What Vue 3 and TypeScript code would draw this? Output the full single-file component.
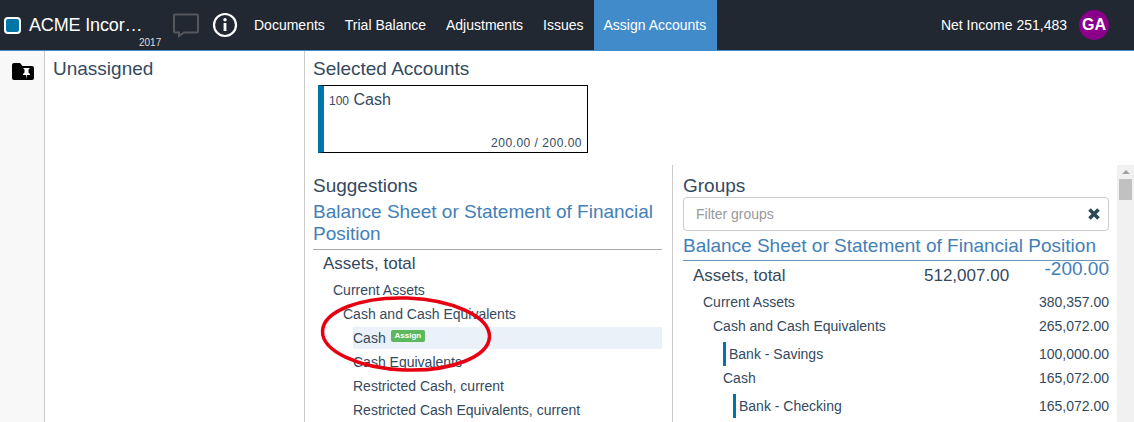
<template>
  <div class="page">
    <nav class="topbar">
      <div class="brand">
        <span class="brand-mark"></span>
        <span class="brand-name">ACME Incor…</span>
        <span class="brand-year">2017</span>
      </div>
      <svg class="chat-icon" width="28" height="28" viewBox="0 0 28 28">
        <path d="M3 3.500h22a1 1 0 0 1 1 1v16a1 1 0 0 1-1 1H12l-5 3.500v-3.500H3a1 1 0 0 1-1-1v-16a1 1 0 0 1 1-1z" fill="none" stroke="#54585d" stroke-width="2" />
      </svg>
      <svg class="info-icon" width="26" height="26" viewBox="0 0 26 26">
        <circle cx="13" cy="13" r="11" fill="none" stroke="#fff" stroke-width="2.200" />
        <rect x="11.600" y="11" width="2.800" height="8" fill="#fff" />
        <circle cx="13" cy="7.800" r="1.700" fill="#fff" />
      </svg>
      <ul class="nav-links">
        <li v-for="link in links" :key="link" :class="{ active: link === 'Assign Accounts' }">{{ link }}</li>
      </ul>
      <div class="nav-right">
        <span>Net Income 251,483</span>
        <span class="avatar">GA</span>
      </div>
    </nav>

    <div class="main">
      <aside class="rail">
        <svg width="22" height="17" viewBox="0 0 22 17">
          <path d="M2 0h6l2.500 3H20a2 2 0 0 1 2 2v10a2 2 0 0 1-2 2H2a2 2 0 0 1-2-2V2a2 2 0 0 1 2-2z" fill="#000" />
          <path d="M11.500 5h6v1l-1 .5v3l1.500 1.500v1h-3l-.500 4-.500-4h-3v-1l1.500-1.500v-3l-1-.500z" fill="#fff" />
        </svg>
      </aside>

      <section class="unassigned">
        <h3>Unassigned</h3>
      </section>

      <section class="workspace">
        <div class="selected">
          <h3>Selected Accounts</h3>
          <div class="account-card">
            <div class="account-title"><small>100</small> Cash</div>
            <div class="account-amount">200.00 / 200.00</div>
          </div>
        </div>

        <div class="columns">
          <div class="suggestions">
            <h3>Suggestions</h3>
            <h4 class="taxonomy">Balance Sheet or Statement of Financial Position</h4>
            <div class="tree">
              <div class="row-total">Assets, total</div>
              <div class="row lvl1">Current Assets</div>
              <div class="row lvl2">Cash and Cash Equivalents</div>
              <div class="row lvl3 hovered">Cash <span class="assign">Assign</span></div>
              <div class="row lvl3">Cash Equivalents</div>
              <div class="row lvl3">Restricted Cash, current</div>
              <div class="row lvl3">Restricted Cash Equivalents, current</div>
            </div>
            <svg class="annotation" width="176" height="92" viewBox="0 0 176 92">
              <ellipse cx="86" cy="46" rx="83.500" ry="36" transform="rotate(2 86 46)" fill="none" stroke="#e60012" stroke-width="3.500" />
            </svg>
          </div>

          <div class="groups">
            <h3>Groups</h3>
            <div class="filter">
              <span>Filter groups</span>
              <svg width="14" height="14" viewBox="0 0 14 14">
                <path d="M2.500 2.500l9 9M11.500 2.500l-9 9" stroke="#2c4a55" stroke-width="3.600" />
              </svg>
            </div>
            <h4 class="taxonomy underlined">Balance Sheet or Statement of Financial Position</h4>
            <div class="tree">
              <div class="group-total">
                <span class="total-name">Assets, total</span>
                <span class="total-value">512,007.00</span>
                <span class="total-diff">-200.00</span>
              </div>
              <div v-for="g in groupRows" :key="g.name" :class="['group-row', g.cls]">
                <span :class="{ account: g.account }">{{ g.name }}</span>
                <span>{{ g.value }}</span>
              </div>
            </div>
          </div>

          <div class="scrollbar">
            <span class="arrow"></span>
            <span class="thumb"></span>
          </div>
        </div>
      </section>
    </div>
  </div>
</template>

<script setup lang="ts">
const links: string[] = ['Documents', 'Trial Balance', 'Adjustments', 'Issues', 'Assign Accounts']

const groupRows: { name: string; value: string; cls: string; account?: boolean }[] = [
  { name: 'Current Assets', value: '380,357.00', cls: 'lvl1' },
  { name: 'Cash and Cash Equivalents', value: '265,072.00', cls: 'lvl2' },
  { name: 'Bank - Savings', value: '100,000.00', cls: 'lvl3', account: true },
  { name: 'Cash', value: '165,072.00', cls: 'lvl3' },
  { name: 'Bank - Checking', value: '165,072.00', cls: 'lvl4', account: true }
]
</script>

<style>
html, body {
  margin: 0;
  overflow: hidden;
}
</style>

<style scoped>
.page {
  width: 1134px;
  height: 422px;
  overflow: hidden;
  display: flex;
  flex-direction: column;
  font-family: "Liberation Sans", Arial, sans-serif;
  font-size: 14px;
  color: #34495e;
  background: #fff;
}

h3, h4 {
  margin: 0;
  font-weight: 400;
}

.topbar {
  flex: none;
  height: 50px;
  display: flex;
  align-items: center;
  background: #222831;
  border-bottom: 1px solid #428bca;
  color: #fff;
}

.brand {
  position: relative;
  width: 172px;
  display: flex;
  align-items: center;
  padding-left: 4px;
  box-sizing: border-box;
}
.brand-mark {
  width: 13px;
  height: 13px;
  border: 2px solid #fff;
  border-radius: 4px;
  background: #0076a8;
  margin-right: 8px;
}
.brand-name {
  font-size: 18px;
  letter-spacing: -0.15px;
  white-space: nowrap;
}
.brand-year {
  position: absolute;
  left: 139px;
  top: 22px;
  font-size: 10px;
  color: #ddd;
}

.chat-icon {
  margin-right: 12px;
}
.info-icon {
  margin-right: 6px;
}

.nav-links {
  list-style: none;
  margin: 0;
  padding: 0;
  display: flex;
  height: 50px;
}
.nav-links li {
  padding: 0 10px;
  line-height: 50px;
}
.nav-links li.active {
  padding: 0 10.5px 0 10px;
  background: #428bca;
}

.nav-right {
  margin-left: auto;
  display: flex;
  align-items: center;
  gap: 12px;
  padding-right: 25px;
}
.avatar {
  width: 30px;
  height: 30px;
  border-radius: 50%;
  background: #8b008b;
  font-size: 16px;
  font-weight: 700;
  line-height: 30px;
  text-align: center;
}

.main {
  flex: 1;
  min-height: 0;
  display: flex;
}

.rail {
  flex: none;
  width: 32px;
  background: #f8f8f8;
  border-right: 1px solid #ccc;
  padding: 12px 0 0 12px;
}

.unassigned {
  width: 251px;
  flex: none;
  padding-left: 8px;
  border-right: 1px solid #ccc;
}
.unassigned h3,
.selected h3,
.suggestions h3,
.groups h3 {
  font-size: 19px;
  line-height: 20px;
}
.unassigned h3 {
  margin-top: 8px;
}

.workspace {
  flex: 1;
  min-width: 0;
  display: flex;
  flex-direction: column;
}

.selected {
  padding: 8px 0 0 8px;
}
.account-card {
  position: relative;
  width: 263px;
  height: 66px;
  margin: 6px 0 0 5px;
  border: 1px solid #000;
  border-left: 6px solid #0076a8;
}
.account-title {
  padding: 5px 0 0 5px;
  font-size: 16px;
}
.account-title small {
  font-size: 12px;
}
.account-amount {
  position: absolute;
  right: 5px;
  bottom: 2px;
  font-size: 12px;
  letter-spacing: 0.5px;
}

.columns {
  flex: 1;
  min-height: 0;
  display: flex;
  margin-top: 12px;
}

.suggestions {
  position: relative;
  width: 368px;
  flex: none;
  box-sizing: border-box;
  padding: 11px 10px 0 8px;
  border-right: 1px solid #ccc;
}

.taxonomy {
  font-size: 19px;
  line-height: 22px;
  color: #4380b8;
  margin-top: 5px;
  padding-bottom: 4px;
  border-bottom: 1px solid #aaa;
}

.annotation {
  position: absolute;
  left: 15px;
  top: 123px;
}

.row-total {
  padding-left: 10px;
  font-size: 17px;
  line-height: 24px;
  margin-top: 2px;
  margin-bottom: 3px;
}
.row {
  line-height: 22px;
  margin-bottom: 2px;
  white-space: nowrap;
}
.row.lvl1 { padding-left: 20px; }
.row.lvl2 { padding-left: 30px; }
.row.lvl3 { margin-left: 40px; }
.row.hovered {
  background: #eaf1f9;
}
.assign {
  position: relative;
  top: -3px;
  display: inline-block;
  background: #5cb85c;
  color: #fff;
  font-size: 8px;
  font-weight: 700;
  line-height: 12px;
  padding: 0 4px;
  border-radius: 2px;
  vertical-align: middle;
  margin-left: 1px;
}

.groups {
  width: 444px;
  flex: none;
  box-sizing: border-box;
  padding: 11px 8px 0 10px;
}
.filter {
  display: flex;
  align-items: center;
  justify-content: space-between;
  height: 32px;
  margin-top: 1px;
  padding: 0 7px 0 12px;
  border: 1px solid #ccc;
  border-radius: 4px;
  color: #999;
}
.underlined {
  margin-top: 4px;
  padding-bottom: 3px;
  border-bottom-color: #6f94b8;
  white-space: nowrap;
}

.group-total {
  position: relative;
  display: flex;
  align-items: baseline;
  padding-left: 10px;
  font-size: 17px;
  line-height: 24px;
  margin-top: 3px;
  margin-bottom: 2px;
}
.total-name {
  width: 231px;
}
.total-diff {
  position: absolute;
  right: 0;
  top: -7px;
  font-size: 19px;
  color: #4380b8;
}
.group-row {
  display: flex;
  justify-content: space-between;
  line-height: 24px;
  white-space: nowrap;
}
.group-row.lvl1 { padding-left: 20px; }
.group-row.lvl2 { padding-left: 30px; margin-bottom: 4px; }
.group-row.lvl3 { padding-left: 40px; }
.group-row.lvl4 { padding-left: 50px; margin-top: 4px; }
.account {
  display: inline-block;
  border-left: 3px solid #0076a8;
  padding-left: 3px;
}

.scrollbar {
  flex: 1;
  background: #f1f1f1;
  display: flex;
  flex-direction: column;
  align-items: center;
}
.arrow {
  margin-top: 5px;
  border: 4px solid transparent;
  border-top: 0;
  border-bottom: 4px solid #a3a3a3;
}
.thumb {
  width: 13px;
  height: 21px;
  margin-top: 5px;
  background: #c1c1c1;
}
</style>
